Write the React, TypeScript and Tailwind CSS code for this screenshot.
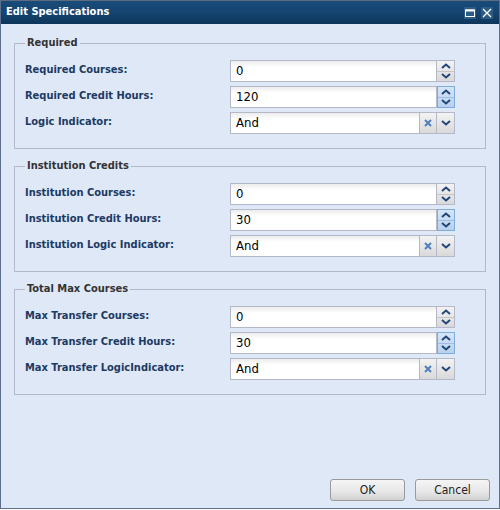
import React from "react";

const FONT = { fontFamily: '"DejaVu Sans Condensed", "DejaVu Sans", "Liberation Sans", sans-serif' };

function ChevronUp() {
  return (
    <svg width="10" height="6" viewBox="0 0 10 6">
      <polyline points="1,5 5,1.5 9,5" fill="none" stroke="#23467a" strokeWidth="2" />
    </svg>
  );
}
function ChevronDown() {
  return (
    <svg width="10" height="6" viewBox="0 0 10 6">
      <polyline points="1,1 5,4.5 9,1" fill="none" stroke="#23467a" strokeWidth="2" />
    </svg>
  );
}

function Spinner({ value, hot }: { value: string; hot?: boolean }) {
  return (
    <div className="flex h-[22px] w-[225px]">
      <div className="flex-1 h-full border border-[#b5b8c8] bg-gradient-to-b from-[#ececec] via-white via-[30%] to-white flex items-center pl-[5px] text-[13px] text-black">
        {value}
      </div>
      <div
        className={
          "w-[18px] h-full flex flex-col border " +
          (hot
            ? "border-[#7eadd9] bg-gradient-to-b from-[#d6e5f7] to-[#b9d1ee]"
            : "border-[#b5b8c8] border-l-0 bg-gradient-to-b from-[#f3f3f3] to-[#d9d9d9]")
        }
      >
        <div className={"flex-1 flex items-center justify-center border-b " + (hot ? "border-[#9dbde3]" : "border-[#c6c6c6]")}>
          <ChevronUp />
        </div>
        <div className="flex-1 flex items-center justify-center">
          <ChevronDown />
        </div>
      </div>
    </div>
  );
}

function Combo({ value }: { value: string }) {
  return (
    <div className="flex h-[22px] w-[225px]">
      <div className="flex-1 h-full border border-[#b5b8c8] bg-gradient-to-b from-[#ececec] via-white via-[30%] to-white flex items-center pl-[5px] text-[13px] text-black">
        {value}
      </div>
      <div className="w-[17px] h-full border border-l-0 border-[#b5b8c8] bg-gradient-to-b from-[#f3f3f3] to-[#d9d9d9] flex items-center justify-center">
        <svg width="8" height="8" viewBox="0 0 8 8">
          <path d="M1 1 L7 7 M7 1 L1 7" stroke="#4f80bd" strokeWidth="2" />
        </svg>
      </div>
      <div className="w-[18px] h-full border border-l-0 border-[#b5b8c8] bg-gradient-to-b from-[#f3f3f3] to-[#d9d9d9] flex items-center justify-center">
        <ChevronDown />
      </div>
    </div>
  );
}

type Row = { label: string; value: string; kind: "spin" | "combo"; hot?: boolean };

function Group({ title, rows }: { title: string; rows: Row[] }) {
  return (
    <fieldset className="border border-[#b5b8c8] px-[10px] pt-[10px] pb-[14px] w-[472px]">
      <legend className="px-[2px] text-[11px] leading-[14px] font-bold text-[#333333]">{title}</legend>
      <div className="flex flex-col gap-[4px]">
        {rows.map((r) => (
          <div key={r.label} className="flex items-center h-[22px]">
            <div className="w-[205px] text-[11px] font-bold text-[#1c3a63] -mt-[2px]">{r.label}</div>
            {r.kind === "spin" ? <Spinner value={r.value} hot={r.hot} /> : <Combo value={r.value} />}
          </div>
        ))}
      </div>
    </fieldset>
  );
}

export default function App() {
  return (
    <div style={FONT} className="w-[500px] h-[510px] bg-white">
      <div className="w-[500px] h-[509px] flex flex-col bg-[#dfe8f6] border-l border-r border-b border-[#5b6f8c]">
        <div className="h-[24px] flex items-center border-t border-[#5d6b80] bg-gradient-to-b from-[#194a78] via-[#164572] via-[50%] to-[#0c3459] pl-[5px] pr-[6px]">
          <div className="flex-1 text-white font-bold text-[11px] -mt-[1px]">Edit Specifications</div>
          <div className="flex gap-[5px] items-center">
            <div className="w-[12px] h-[12px] bg-[#2c5b86] flex items-center justify-center">
              <svg width="10" height="8" viewBox="0 0 10 8">
                <rect x="0.5" y="1" width="9" height="6.5" fill="none" stroke="white" strokeWidth="1" />
                <rect x="0" y="0.5" width="10" height="2" fill="white" />
              </svg>
            </div>
            <div className="w-[12px] h-[12px] bg-[#2c5b86] flex items-center justify-center">
              <svg width="10" height="10" viewBox="0 0 10 10">
                <path d="M1 1 L9 9 M9 1 L1 9" stroke="white" strokeWidth="1.3" />
              </svg>
            </div>
          </div>
        </div>
        <div className="flex-1 flex flex-col gap-[10px] pt-[12px] pl-[13px]">
          <Group
            title="Required"
            rows={[
              { label: "Required Courses:", value: "0", kind: "spin" },
              { label: "Required Credit Hours:", value: "120", kind: "spin", hot: true },
              { label: "Logic Indicator:", value: "And", kind: "combo" },
            ]}
          />
          <Group
            title="Institution Credits"
            rows={[
              { label: "Institution Courses:", value: "0", kind: "spin" },
              { label: "Institution Credit Hours:", value: "30", kind: "spin", hot: true },
              { label: "Institution Logic Indicator:", value: "And", kind: "combo" },
            ]}
          />
          <Group
            title="Total Max Courses"
            rows={[
              { label: "Max Transfer Courses:", value: "0", kind: "spin" },
              { label: "Max Transfer Credit Hours:", value: "30", kind: "spin", hot: true },
              { label: "Max Transfer LogicIndicator:", value: "And", kind: "combo" },
            ]}
          />
        </div>
        <div className="flex justify-end gap-[10px] pr-[9px] pb-[7px]">
          {["OK", "Cancel"].map((b) => (
            <div
              key={b}
              className="w-[75px] h-[22px] rounded-[3px] border border-[#9a9a9a] bg-gradient-to-b from-[#f5f5f5] via-[#e8e8e8] via-[55%] to-[#d2d2d2] flex items-center justify-center text-[12px] text-[#222]"
            >
              {b}
            </div>
          ))}
        </div>
      </div>
    </div>
  );
}
